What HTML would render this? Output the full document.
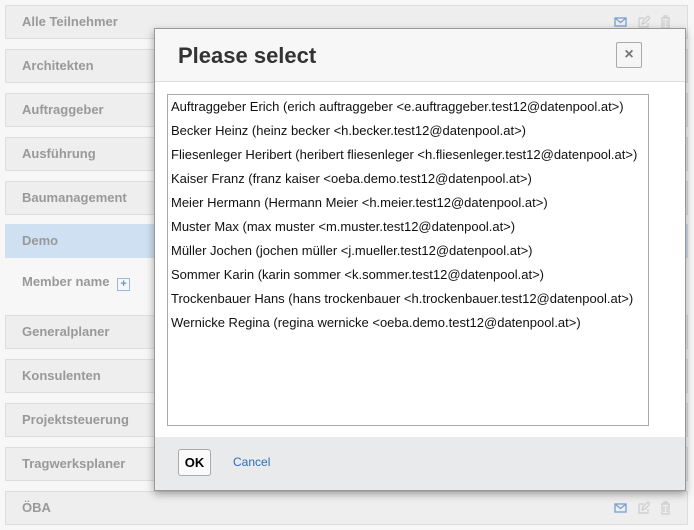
<!DOCTYPE html>
<html><head><style>
body{margin:0;width:694px;height:530px;background:#f7f7f7;font-family:"Liberation Sans",sans-serif;position:relative;overflow:hidden}
.row{position:absolute;left:5px;width:681px;height:32px;background:#eee;border:1px solid #ddd;color:#999;font-weight:bold;font-size:13px;line-height:32px;text-indent:16px}
.ic{position:absolute;top:9px;width:13px;height:14px}
.modal{position:absolute;left:154px;top:28px;width:530px;height:461px;background:#fff;border:1px solid #999;box-shadow:0 3px 8px rgba(0,0,0,.35)}
.hd{height:52px;border-bottom:1px solid #ddd;background:#f7f7f7}
.hd h1{margin:0;position:absolute;left:23px;top:14px;font-size:22px;color:#333}
.x{position:absolute;left:461px;top:13px;width:24px;height:24px;border:1px solid #aaa;border-radius:2px;background:#f5f5f5;text-align:center;line-height:23px;color:#777;font-size:16px;font-weight:bold}
.lst{position:absolute;left:12px;top:65px;width:480px;height:330px;border:1px solid #aaa;font-size:13px;color:#111}
.lst div{height:24px;line-height:23px;padding-left:3px;white-space:nowrap}
.ft{position:absolute;left:0;top:408px;width:530px;height:53px;background:#e9eaeb}
.ok{position:absolute;left:23px;top:12px;width:31px;height:25px;border:1px solid #aaa;border-radius:3px;background:#fafafa;font-weight:bold;font-size:13px;text-align:center;line-height:25px}
.cn{position:absolute;left:78px;top:18px;font-size:12px;color:#2a6ebb}
</style></head><body>
<div class="row" style="top:5px">Alle Teilnehmer
<svg class="ic" style="left:608px" viewBox="0 0 13 14"><rect x="1" y="3" width="11" height="8" fill="none" stroke="#7a9fd0" stroke-width="1.3"/><path d="M1 3l5.5 4.5L12 3" fill="none" stroke="#7a9fd0" stroke-width="1.3"/></svg>
<svg class="ic" style="left:631px" viewBox="0 0 13 14"><path d="M2 3h5M2 3v9h9V8M5 9l1-3 5-5 2 2-5 5z" fill="none" stroke="#ccc" stroke-width="1.2"/></svg>
<svg class="ic" style="left:653px" viewBox="0 0 13 14"><path d="M2 3h9M5 3V1h3v2M3 3v10h7V3M5 5v6M8 5v6" fill="none" stroke="#ccc" stroke-width="1.2"/></svg></div>
<div class="row" style="top:49px">Architekten</div>
<div class="row" style="top:93px">Auftraggeber</div>
<div class="row" style="top:137px">Ausführung</div>
<div class="row" style="top:181px">Baumanagement</div>
<div class="row" style="top:224px;background:#cfe0f3;border-color:#cfe0f3">Demo
<svg class="ic" style="left:653px" viewBox="0 0 13 14"><path d="M2 3h9M5 3V1h3v2M3 3v10h7V3M5 5v6M8 5v6" fill="none" stroke="#e87a8a" stroke-width="1.2"/></svg></div>
<div style="position:absolute;left:22px;top:274px;font-size:13px;font-weight:bold;color:#999">Member name <span style="display:inline-block;width:11px;height:11px;border:1px solid #9cb8dc;color:#6a96cc;font-size:11px;line-height:11px;text-align:center;vertical-align:-1px;margin-left:4px">+</span></div>
<div class="row" style="top:315px">Generalplaner</div>
<div class="row" style="top:359px">Konsulenten</div>
<div class="row" style="top:403px">Projektsteuerung</div>
<div class="row" style="top:447px">Tragwerksplaner</div>
<div class="row" style="top:491px">ÖBA
<svg class="ic" style="left:608px" viewBox="0 0 13 14"><rect x="1" y="3" width="11" height="8" fill="none" stroke="#7a9fd0" stroke-width="1.3"/><path d="M1 3l5.5 4.5L12 3" fill="none" stroke="#7a9fd0" stroke-width="1.3"/></svg>
<svg class="ic" style="left:631px" viewBox="0 0 13 14"><path d="M2 3h5M2 3v9h9V8M5 9l1-3 5-5 2 2-5 5z" fill="none" stroke="#ccc" stroke-width="1.2"/></svg>
<svg class="ic" style="left:653px" viewBox="0 0 13 14"><path d="M2 3h9M5 3V1h3v2M3 3v10h7V3M5 5v6M8 5v6" fill="none" stroke="#ccc" stroke-width="1.2"/></svg></div>
<div class="modal">
<div class="hd"><h1>Please select</h1><div class="x">×</div></div>
<div class="lst">
<div>Auftraggeber Erich (erich auftraggeber &lt;e.auftraggeber.test12@datenpool.at&gt;)</div>
<div>Becker Heinz (heinz becker &lt;h.becker.test12@datenpool.at&gt;)</div>
<div>Fliesenleger Heribert (heribert fliesenleger &lt;h.fliesenleger.test12@datenpool.at&gt;)</div>
<div>Kaiser Franz (franz kaiser &lt;oeba.demo.test12@datenpool.at&gt;)</div>
<div>Meier Hermann (Hermann Meier &lt;h.meier.test12@datenpool.at&gt;)</div>
<div>Muster Max (max muster &lt;m.muster.test12@datenpool.at&gt;)</div>
<div>Müller Jochen (jochen müller &lt;j.mueller.test12@datenpool.at&gt;)</div>
<div>Sommer Karin (karin sommer &lt;k.sommer.test12@datenpool.at&gt;)</div>
<div>Trockenbauer Hans (hans trockenbauer &lt;h.trockenbauer.test12@datenpool.at&gt;)</div>
<div>Wernicke Regina (regina wernicke &lt;oeba.demo.test12@datenpool.at&gt;)</div>
</div>
<div class="ft"><div class="ok">OK</div><div class="cn">Cancel</div></div>
</div>
</body></html>
